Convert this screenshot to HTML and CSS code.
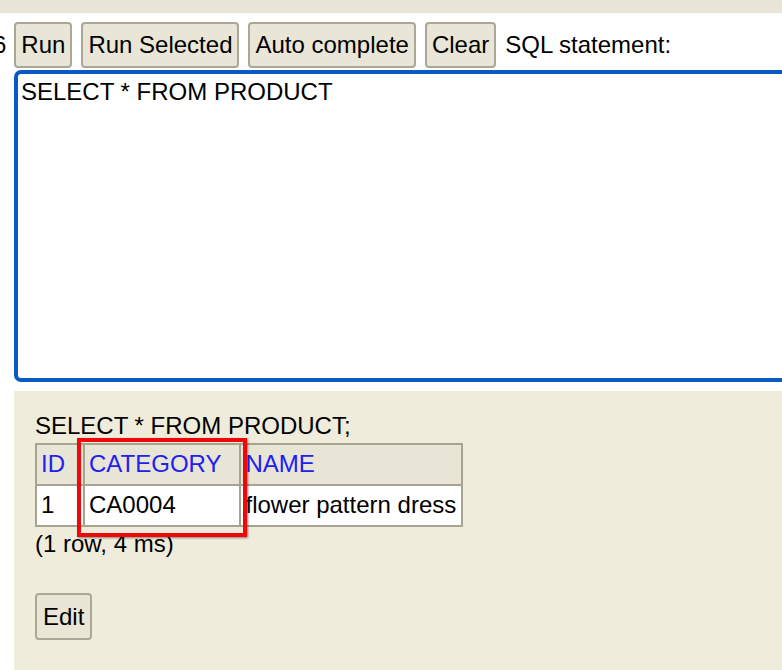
FILE: index.html
```html
<!DOCTYPE html>
<html>
<head>
<meta charset="utf-8">
<link rel="stylesheet" href="styles.css">
</head>
<body>
<div class="topbar"></div>
<div class="toolbar">
  <span class="clipped">6</span>
  <button class="btn">Run</button>
  <button class="btn">Run Selected</button>
  <button class="btn">Auto complete</button>
  <button class="btn">Clear</button>
  <span class="label">SQL statement:</span>
</div>
<div class="editor">SELECT * FROM PRODUCT</div>
<div class="result">
  <div class="query">SELECT * FROM PRODUCT;</div>
  <table class="grid">
    <tr><th>ID</th><th>CATEGORY</th><th>NAME</th></tr>
    <tr><td>1</td><td>CA0004</td><td>flower pattern dress</td></tr>
  </table>
  <div class="stats">(1 row, 4 ms)</div>
  <button class="btn edit">Edit</button>
  <div class="highlight"></div>
</div>
</body>
</html>
```
FILE: styles.css
```css
html, body {
  margin: 0;
  padding: 0;
  overflow: hidden;
  background: #ffffff;
}
body {
  font-family: "Liberation Sans", Arial, sans-serif;
  font-size: 24px;
  color: #000;
}
.topbar {
  height: 13px;
  background: #e8e5d6;
}
.toolbar {
  display: flex;
  align-items: center;
  gap: 9px;
  margin-top: 9px;
  height: 46px;
  white-space: nowrap;
}
.clipped {
  margin-left: -7px;
  margin-right: -1px;
}
.btn {
  box-sizing: border-box;
  height: 46px;
  padding: 0 5px;
  border: 2px solid #aaa796;
  border-radius: 4px;
  background: #e9e6d7;
  font-family: "Liberation Sans", Arial, sans-serif;
  font-size: 24px;
  color: #000;
}
.label {
  margin-left: 0;
}
.editor {
  box-sizing: border-box;
  margin: 2px 0 0 14px;
  width: 820px;
  height: 312px;
  border: 4px solid #0a5ac4;
  border-radius: 7px;
  padding: 4px 3px;
  background: #fff;
}
.result {
  position: relative;
  margin: 9px 0 0 14px;
  height: 300px;
  padding: 21px 21px 0;
  background: #f0ecdb;
}
.query {
  line-height: 28px;
}
.grid {
  margin-top: 3px;
  border-collapse: collapse;
  border: 2px solid #a6a390;
}
.grid th, .grid td {
  border: 2px solid #a6a390;
  line-height: 28px;
  padding: 5px 5px 6px 4px;
  text-align: left;
  font-weight: normal;
  white-space: nowrap;
}
.grid th {
  background: #e8e5d6;
  color: #2020f0;
  padding-right: 18px;
}
.grid td {
  background: #fff;
}
.stats {
  margin-top: 3px;
  line-height: 28px;
}
.edit {
  display: block;
  margin-top: 35px;
  height: 47px;
  padding: 0 6px;
}
.highlight {
  position: absolute;
  left: 63px;
  top: 47px;
  width: 170px;
  height: 99px;
  box-sizing: border-box;
  border: 4px solid #f00808;
  box-shadow: 1px 1px 2px rgba(0, 0, 0, 0.45);
}
```
